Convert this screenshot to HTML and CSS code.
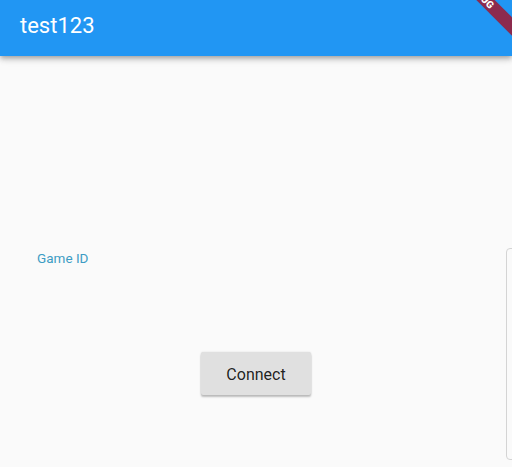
FILE: index.html
```html
<!DOCTYPE html>
<html lang="en">

<head>
    <meta charset="UTF-8">
    <meta name="viewport" content="width=device-width, initial-scale=1.0">
    <title>test123</title>
    <link rel="stylesheet" href="styles.css">
</head>

<body>
    <header class="appbar">
        <h1 class="appbar-title">test123</h1>
        <div class="debug-banner">DEBUG</div>
    </header>

    <main class="content">
        <div class="form">
            <label class="field-label" for="gameId">Game ID</label>
            <button class="connect-btn">Connect</button>
        </div>
        <div class="side-panel"></div>
    </main>
</body>

</html>
```

FILE: styles.css
```css
html,
body {
    margin: 0;
    width: 512px;
    height: 467px;
    overflow: hidden;
    font-family: Roboto, 'Noto Sans', sans-serif;
    background-color: #fafafa;
}

.appbar {
    position: relative;
    z-index: 2;
    height: 56px;
    background-color: #2196f3;
    overflow: hidden;
    box-shadow: 0 2px 4px -1px rgba(0, 0, 0, 0.2),
        0 4px 5px 0 rgba(0, 0, 0, 0.14),
        0 1px 10px 0 rgba(0, 0, 0, 0.12);
}

.appbar-title {
    margin: 0;
    padding-left: 20px;
    line-height: 52px;
    font-size: 22px;
    font-weight: 400;
    color: white;
}

.debug-banner {
    position: absolute;
    left: 426px;
    top: -6px;
    width: 120px;
    height: 13px;
    padding-right: 14px;
    box-sizing: border-box;
    transform: rotate(45deg);
    background-color: #8c2a4e;
    color: white;
    font-size: 10px;
    font-weight: 900;
    line-height: 13px;
    text-align: center;
}

.content {
    display: flex;
    height: 411px;
}

.form {
    flex: 1;
}

.field-label {
    display: block;
    margin: 194px 0 0 37px;
    font-size: 13.5px;
    line-height: 16px;
    color: #3d9cc4;
}

.connect-btn {
    display: block;
    margin: 86px auto 0;
    width: 110px;
    height: 43px;
    padding-top: 2px;
    border: none;
    border-radius: 2px;
    background-color: #e0e0e0;
    color: rgba(0, 0, 0, 0.87);
    font-family: Roboto, sans-serif;
    font-size: 16px;
    font-weight: 400;
    box-shadow: 0 2px 2px rgba(0, 0, 0, 0.24),
        0 0 2px rgba(0, 0, 0, 0.12);
}

.side-panel {
    flex: none;
    box-sizing: border-box;
    width: 20px;
    height: 212px;
    margin: 192px -14px 0 -6px;
    border: 1px solid #d4d4d4;
    border-radius: 4px;
}
```
